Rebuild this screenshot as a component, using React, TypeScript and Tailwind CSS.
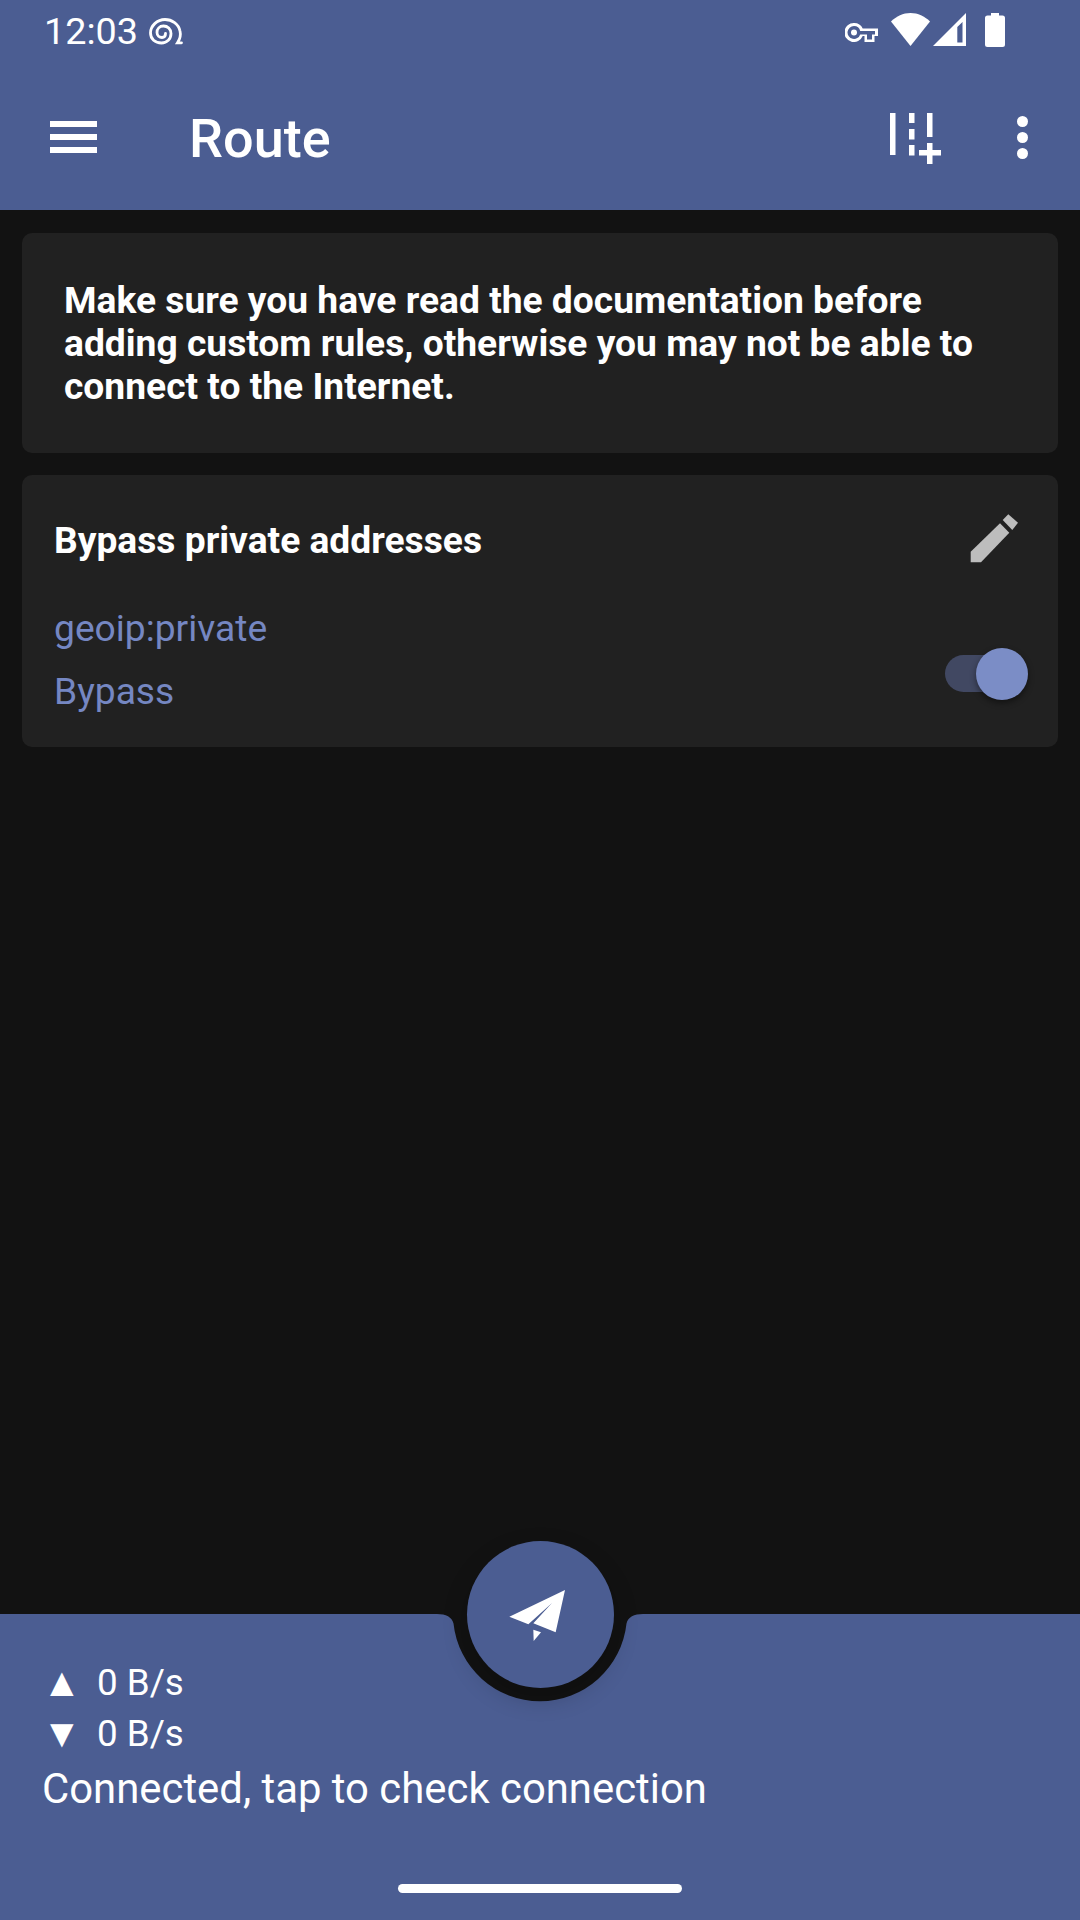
const roboto = { fontFamily: 'Roboto, sans-serif' };

function SnailIcon() {
  return (
    <svg width="34" height="27" viewBox="0 0 34 27" fill="none" stroke="white" strokeWidth="2.8" strokeLinecap="round">
      <path d="M32.500 24.800h-4C31 21 32 17 31 13 29.500 6 23 1.500 16 1.500 8 1.500 1.500 8 1.500 15c0 6 4.500 10 11 10 5.500 0 9.500-4 9.500-9.500C22 11 18.500 8 14.500 8 10.500 8 8 11 8 14.500c0 3 2.500 5 5 5s3.500-2 3.500-4" />
    </svg>
  );
}

function StatusIcons() {
  return (
    <div className="flex items-center -mt-[7px]">
      <svg width="33" height="19" viewBox="0 0 33 19" className="mt-[6px]">
        <path
          fillRule="evenodd"
          fill="white"
          d="M9 0a9.500 9.500 0 0 1 8.700 5.500H33V13h-3.500v6h-10v-6h-1.800A9.500 9.500 0 1 1 9 0zm0 3a6.500 6.500 0 1 0 6.200 8.500H22v5h5v-5h3V8H15.200A6.500 6.500 0 0 0 9 3zm0 3.500a3 3 0 1 1 0 6 3 3 0 0 1 0-6z"
        />
      </svg>
      <svg width="39" height="33" viewBox="0 0 39 33" className="ml-[13px]">
        <path fill="white" d="M19.500 33 0 8.500C5.500 3.200 12 0 19.500 0S33.500 3.200 39 8.500z" />
      </svg>
      <svg width="33" height="33" viewBox="0 0 33 33" className="ml-[3px]">
        <path fillRule="evenodd" fill="white" d="M33 0v33H0zM29.500 9 24.300 14V29.500H29.500z" />
      </svg>
      <svg width="20" height="34" viewBox="0 0 20 34" className="ml-[19px]">
        <path fill="white" d="M6 0h8v2.500h3.500A2.500 2.500 0 0 1 20 5v26.500a2.500 2.500 0 0 1-2.500 2.500h-15A2.500 2.500 0 0 1 0 31.500V5a2.500 2.500 0 0 1 2.500-2.500H6z" />
      </svg>
    </div>
  );
}

function RouteAddIcon() {
  return (
    <svg width="51" height="51" viewBox="0 0 51 51" fill="white">
      <rect x="0" y="0" width="5.500" height="42" />
      <rect x="19" y="0" width="5.500" height="10" />
      <rect x="19" y="16" width="5.500" height="10.500" />
      <rect x="19" y="32" width="5.500" height="10.500" />
      <rect x="37" y="0" width="5.500" height="24" />
      <rect x="29" y="37" width="22" height="5.500" />
      <rect x="37" y="30" width="5.500" height="21" />
    </svg>
  );
}

function PlaneIcon() {
  return (
    <svg width="80" height="80" viewBox="300 193 240 240" fill="white" className="mr-[2px]">
      <path d="M328 318 495 238 467 365 400 338 456 277 385 341z" />
      <path d="M400 357 423 365 401 391z" />
    </svg>
  );
}

export default function App() {
  return (
    <div className="w-[1080px] h-[1920px] flex flex-col bg-[#121212] text-white overflow-hidden" style={roboto}>
      <header className="h-[210px] bg-[#4b5d92] shrink-0">
        <div className="h-[66px] flex items-center justify-between pl-[44px] pr-[75px]">
          <div className="flex items-center gap-[11px] -mt-[3px]">
            <span className="text-[37.75px] leading-none font-[450]">12:03</span>
            <SnailIcon />
          </div>
          <StatusIcons />
        </div>
        <div className="h-[144px] flex items-center pl-[50px] pr-[52px]">
          <div className="w-[47px] flex flex-col gap-[7.5px] -mt-[2px]">
            <div className="h-[5.500px] bg-white" />
            <div className="h-[5.500px] bg-white" />
            <div className="h-[5.500px] bg-white" />
          </div>
          <h1 className="ml-[92px] text-[54px] font-medium leading-none flex-1 mt-[2px]">Route</h1>
          <RouteAddIcon />
          <div className="ml-[76px] w-[11px] flex flex-col gap-[5px] -mt-[2px]">
            <div className="h-[11px] rounded-full bg-white" />
            <div className="h-[11px] rounded-full bg-white" />
            <div className="h-[11px] rounded-full bg-white" />
          </div>
        </div>
      </header>

      <main className="flex-1 px-[22px] pt-[23px] flex flex-col gap-[22px]">
        <section className="h-[220px] bg-[#212121] rounded-[10px] pl-[42px] pr-[40px] flex items-center">
          <p className="text-[37.2px] leading-[43px] font-bold mt-[1px]">
            Make sure you have read the documentation before adding custom rules, otherwise you may not be able to
            connect to the Internet.
          </p>
        </section>

        <section className="h-[272px] bg-[#212121] rounded-[10px] pl-[32px] pr-[30px] pt-[43px] flex flex-col">
          <div className="flex items-start justify-between">
            <h2 className="text-[37.2px] leading-[44px] font-bold">Bypass private addresses</h2>
            <svg width="48" height="49" viewBox="0 0 48 49" fill="#bdbdbd" className="mr-[10px] -mt-[4px]">
              <path d="M0.700 37.700 30 9.300 39.300 18.700 11 48.300H0.700z" />
              <path d="M32.700 6 38.300 0.300 48 8.700 42.300 16z" />
            </svg>
          </div>
          <div className="mt-[34px] flex items-center justify-between">
            <div className="text-[#7587c2] text-[37.2px] leading-[63px]">
              <div>geoip:private</div>
              <div>Bypass</div>
            </div>
            <div className="relative w-[83px] h-[52px] flex items-center mt-[27px]">
              <div className="w-[72px] h-[37px] rounded-full bg-[#414862]" />
              <div className="absolute right-0 top-0 w-[52px] h-[52px] rounded-full bg-[#7b8dc6] shadow-[0_3px_6px_rgba(0,0,0,0.45)]" />
            </div>
          </div>
        </section>
      </main>

      <footer className="relative h-[306px] shrink-0 bg-[#4b5d92] pl-[42px] pt-[43px]">
        <div className="text-[36.75px] leading-[51px]">
          <div className="flex items-center">
            <span className="w-[55px] text-[40px] leading-none">▲</span>
            <span>0 B/s</span>
          </div>
          <div className="flex items-center">
            <span className="w-[55px] text-[40px] leading-none">▼</span>
            <span>0 B/s</span>
          </div>
        </div>
        <div className="text-[41.85px] leading-[56px] mt-[2px]">Connected, tap to check connection</div>

        {/* notch cut out of the bar */}
        <svg width="240" height="90" viewBox="0 0 240 90" className="absolute left-[420px] top-0" fill="#121212">
          <path d="M17 0C26 0 32 3 33.500 9.500A87 87 0 0 0 206.500 9.500C208 3 214 0 223 0Z" />
        </svg>
        <button className="absolute left-[467px] -top-[73px] w-[147px] h-[147px] rounded-full bg-[#4b5d92] flex items-center justify-center shadow-[0_10px_24px_rgba(0,0,0,0.22)]">
          <PlaneIcon />
        </button>

        <div className="absolute left-[398px] bottom-[27px] w-[284px] h-[9px] rounded-full bg-white" />
      </footer>
    </div>
  );
}
